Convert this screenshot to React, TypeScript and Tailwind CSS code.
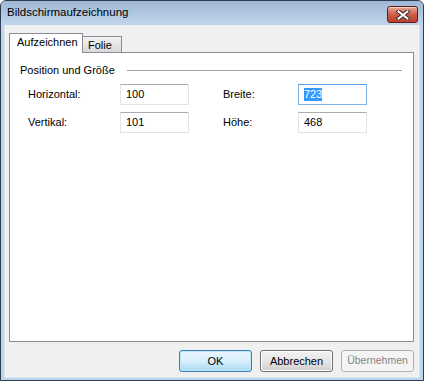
import React from "react";

const font = { fontFamily: '"Liberation Sans", Arial, sans-serif' };

function CloseButton() {
  return (
    <div className="absolute right-[5px] top-[5px] w-[31px] h-[17px] rounded-[3px] border border-[#5a1f1a] bg-gradient-to-b from-[#e8a899] via-[#cc5d4a] to-[#b8402c] flex items-center justify-center shadow-[inset_0_1px_0_rgba(255,255,255,0.5)]">
      <svg width="14" height="10" viewBox="0 0 14 10">
        <path
          d="M2.5 1.5 L7 5 L11.5 1.5 M2.5 8.5 L7 5 L11.5 8.5"
          stroke="#3a2a2a"
          strokeWidth="4"
          fill="none"
          strokeLinecap="square"
        />
        <path
          d="M2.5 1.5 L7 5 L11.5 1.5 M2.5 8.5 L7 5 L11.5 8.5"
          stroke="#ffffff"
          strokeWidth="2"
          fill="none"
          strokeLinecap="square"
        />
      </svg>
    </div>
  );
}

function Field({ value, focused }: { value: string; focused?: boolean }) {
  return (
    <div
      className={
        "w-[69px] h-[21px] bg-white flex items-center pl-[5px] text-[11px] text-black border " +
        (focused
          ? "border-[#7eb4ea] border-t-[#569de5]"
          : "border-[#e2e3ea] border-t-[#abadb3]")
      }
    >
      {focused ? (
        <span className="bg-[#3399ff] text-white leading-[13px]">{value}</span>
      ) : (
        <span>{value}</span>
      )}
    </div>
  );
}

export default function App() {
  return (
    <div
      className="w-[424px] h-[381px] relative rounded-t-[6px] border border-[#2f3e4f] bg-[#b4cbe6] flex flex-col overflow-hidden"
      style={font}
    >
      {/* Title bar */}
      <div className="h-[24px] shrink-0 relative bg-gradient-to-b from-[#9fb8d5] to-[#c2d5ec] flex items-center pl-[6px]">
        <span className="text-[11.5px] text-black">Bildschirmaufzeichnung</span>
        <CloseButton />
      </div>
      {/* Body with frame */}
      <div className="flex-1 flex flex-col px-[3px] pb-[2px] bg-gradient-to-b from-[#c2d5ec] to-[#bcd3ec]">
        <div className="flex-1 bg-[#f0f0f0] border-l border-r border-b border-[#dbe7f4] flex flex-col pl-[4px] pr-[5px]">
          {/* Tabs */}
          <div className="mt-[7px] flex items-end h-[20px] relative z-10">
            <div className="w-[74px] h-[20px] bg-white border border-b-0 border-[#898c95] flex items-center pl-[7px] text-[11px] text-black -mb-px pb-[2px]">
              Aufzeichnen
            </div>
            <div className="w-[40px] h-[16px] -ml-px bg-gradient-to-b from-[#f2f2f2] to-[#d9d9d9] border border-b-0 border-[#898c95] flex items-center pl-[5px] pt-[1px] text-[11px] text-black">
              Folie
            </div>
          </div>
          {/* Pane */}
          <div className="w-[405px] h-[290px] bg-white border border-[#898c95] flex flex-col">
            <div className="mt-[10px] pl-[10px] pr-[11px] flex items-center h-[14px]">
              <span className="text-[11px] text-black">Position und Größe</span>
              <div className="flex-1 ml-[12px] h-px bg-[#a0a0a0]" />
            </div>
            <div className="mt-[7px] pl-[18px] flex flex-col gap-[7px] text-[11px] text-black">
              <div className="flex items-center">
                <span className="w-[92px]">Horizontal:</span>
                <Field value="100" />
                <span className="w-[75px] ml-[34px]">Breite:</span>
                <Field value="723" focused />
              </div>
              <div className="flex items-center">
                <span className="w-[92px]">Vertikal:</span>
                <Field value="101" />
                <span className="w-[75px] ml-[34px]">Höhe:</span>
                <Field value="468" />
              </div>
            </div>
          </div>
          {/* Buttons */}
          <div className="mt-[8px] flex justify-end gap-[8px] text-[11px]">
            <div className="w-[73px] h-[22px] rounded-[3px] border border-[#3c7fb1] bg-gradient-to-b from-[#eaf6fd] via-[#d9f0fc] to-[#a7d9f5] flex items-center justify-center text-black shadow-[inset_0_0_0_1px_#bfe6fa]">
              OK
            </div>
            <div className="w-[73px] h-[22px] rounded-[3px] border border-[#707070] bg-gradient-to-b from-[#f2f2f2] via-[#e6e6e6] to-[#cfcfcf] flex items-center justify-center text-black shadow-[inset_0_0_0_1px_#fcfcfc]">
              Abbrechen
            </div>
            <div className="w-[73px] h-[22px] rounded-[3px] border border-[#adb2b5] bg-[#f4f4f4] flex items-center justify-center text-[#838383] text-[10.5px]">
              Übernehmen
            </div>
          </div>
        </div>
      </div>
    </div>
  );
}
